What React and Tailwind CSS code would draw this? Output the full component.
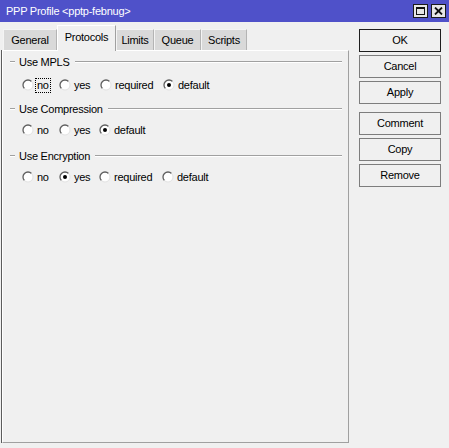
import React from "react";

function Radio({ checked }) {
  return (
    <svg width="12" height="12" viewBox="0 0 12 12" className="shrink-0">
      <circle cx="6" cy="6" r="5" fill="#ffffff" />
      <path d="M 2.46 9.54 A 5 5 0 0 1 9.54 2.46" fill="none" stroke="#5f5f5f" strokeWidth="1.3" />
      <path d="M 9.54 2.46 A 5 5 0 0 1 2.46 9.54" fill="none" stroke="#e2e2e2" strokeWidth="1" />
      {checked && <circle cx="6" cy="6" r="2" fill="#000" />}
    </svg>
  );
}

function RadioItem({ label, checked, w, focus }) {
  return (
    <div className={`flex items-center gap-[1px] ${w}`}>
      <Radio checked={checked} />
      <span className={focus ? "border border-dotted border-black px-[1px] leading-[13px]" : "px-[2px]"}>{label}</span>
    </div>
  );
}

function Header({ title, mt }) {
  return (
    <div className={`flex items-center h-[16px] ${mt}`}>
      <div className="ml-[7px] w-[5px] h-[2px] border-t border-[#a0a0a0] border-b border-b-white" />
      <span className="ml-[4px]">{title}</span>
      <div className="ml-[5px] mr-[6px] flex-1 h-[2px] border-t border-[#a0a0a0] border-b border-b-white" />
    </div>
  );
}

function Btn({ label, def, mt }) {
  return (
    <div
      className={`h-[23px] w-[82px] flex items-center justify-center bg-[#f0f0f0] border ${
        def ? "border-[#1e1e1e]" : "border-[#7d7d7d]"
      } ${mt}`}
    >
      {label}
    </div>
  );
}

export default function App() {
  const tabs = [
    { t: "General", w: "w-[54px]" },
    { t: "Protocols", w: "w-[59px]", active: true },
    { t: "Limits", w: "w-[38px]" },
    { t: "Queue", w: "w-[47px]" },
    { t: "Scripts", w: "w-[46px]" },
  ];
  return (
    <div className="w-[449px] h-[448px] bg-[#f0f0f0] flex flex-col overflow-hidden text-black text-[11px] tracking-[-0.25px] font-['Liberation_Sans',Arial,sans-serif]">
      {/* Title bar */}
      <div className="h-[22px] bg-[#4f51c9] flex items-center pl-[6px] pr-[3px] text-white">
        <span className="flex-1">PPP Profile &lt;pptp-febnug&gt;</span>
        <div className="flex gap-[3px]">
          <div className="w-[15px] h-[14px] bg-[#e6e6e6] border border-[#1a1a1a] flex items-center justify-center">
            <div className="w-[9px] h-[8px] border border-[#111] border-t-2" />
          </div>
          <div className="w-[15px] h-[14px] bg-[#e6e6e6] border border-[#1a1a1a] flex items-center justify-center">
            <svg width="9" height="8" viewBox="0 0 9 8">
              <path d="M1 0.5 L8 7.5 M8 0.5 L1 7.5" stroke="#111" strokeWidth="1.8" />
            </svg>
          </div>
        </div>
      </div>

      <div className="flex flex-1 min-h-0">
        {/* Left column */}
        <div className="ml-[1px] w-[348px] flex flex-col pb-[5px]">
          {/* Tabs */}
          <div className="h-[28px] flex items-end pl-[2px]">
            {tabs.map((tb) =>
              tb.active ? (
                <div
                  key={tb.t}
                  className={`${tb.w} h-[26px] -mb-[1px] relative z-10 bg-[#f0f0f0] border-l border-t border-white border-r border-r-[#a0a0a0] flex items-center justify-center pb-[3px]`}
                >
                  {tb.t}
                </div>
              ) : (
                <div
                  key={tb.t}
                  className={`${tb.w} h-[21px] bg-[#d9d9d9] border-l border-t border-[#f4f4f4] border-r border-r-[#b4b4b4] flex items-center justify-center`}
                >
                  {tb.t}
                </div>
              )
            )}
          </div>
          {/* Panel */}
          <div className="flex-1 border-l border-[#5c5c5c]">
            <div className="h-full border-l border-t border-white border-r border-b border-r-[#a0a0a0] border-b-[#a0a0a0] flex flex-col pt-[3px]">
              <Header title="Use MPLS" mt="" />
              <div className="mt-[7px] h-[16px] flex items-center pl-[19px]">
                <RadioItem label="no" w="w-[37px]" focus />
                <RadioItem label="yes" w="w-[41px]" />
                <RadioItem label="required" w="w-[63px]" />
                <RadioItem label="default" checked />
              </div>
              <Header title="Use Compression" mt="mt-[8px]" />
              <div className="mt-[5px] h-[16px] flex items-center pl-[19px]">
                <RadioItem label="no" w="w-[37px]" />
                <RadioItem label="yes" w="w-[40px]" />
                <RadioItem label="default" checked />
              </div>
              <Header title="Use Encryption" mt="mt-[10px]" />
              <div className="mt-[5px] h-[16px] flex items-center pl-[19px]">
                <RadioItem label="no" w="w-[37px]" />
                <RadioItem label="yes" w="w-[40px]" checked />
                <RadioItem label="required" w="w-[63px]" />
                <RadioItem label="default" />
              </div>
            </div>
          </div>
        </div>

        {/* Right buttons */}
        <div className="ml-[10px] pt-[7px] flex flex-col">
          <Btn label="OK" def />
          <Btn label="Cancel" mt="mt-[3px]" />
          <Btn label="Apply" mt="mt-[3px]" />
          <Btn label="Comment" mt="mt-[8px]" />
          <Btn label="Copy" mt="mt-[3px]" />
          <Btn label="Remove" mt="mt-[3px]" />
        </div>
      </div>
    </div>
  );
}
